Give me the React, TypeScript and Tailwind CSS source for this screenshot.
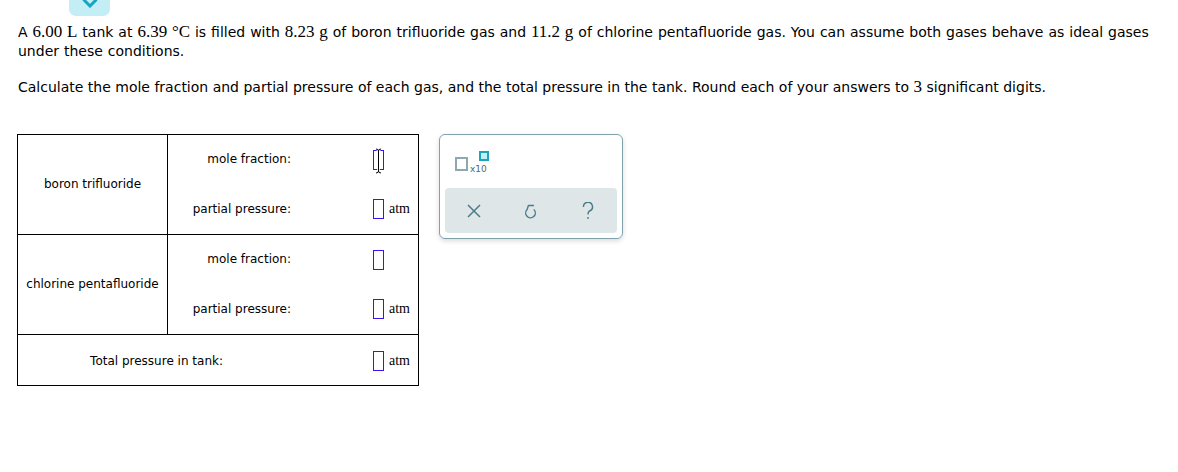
import React from "react";

function Box({ cursor = false }: { cursor?: boolean }) {
  return (
    <div className="relative w-[11px] h-[20px] border border-[#3b12f5] shrink-0">
      {cursor && (
        <svg className="absolute left-[0px] top-[-3px]" width="9" height="26" viewBox="0 0 9 26">
          <path d="M2 1 Q4.5 1 4.5 3 Q4.5 1 7 1 M4.5 3 V23 M2 25 Q4.5 25 4.5 23 Q4.5 25 7 25" stroke="#fff" strokeWidth="2.6" fill="none" />
          <path d="M2 1 Q4.5 1 4.5 3 Q4.5 1 7 1 M4.5 3 V23 M2 25 Q4.5 25 4.5 23 Q4.5 25 7 25" stroke="#000" strokeWidth="1" fill="none" />
        </svg>
      )}
    </div>
  );
}

function Atm() {
  return <span className="ml-[5px] text-[14px] leading-none font-['Liberation_Serif',serif]">atm</span>;
}

function SubRow({ label, unit, cursor }: { label: string; unit: boolean; cursor?: boolean }) {
  return (
    <div className="flex-1 flex items-center">
      <div className="w-[123px] text-right">{label}</div>
      <div className="ml-[82px] flex items-center">
        <Box cursor={cursor} />
        {unit && <Atm />}
      </div>
    </div>
  );
}

function GasRow({ name, cursor }: { name: string; cursor?: boolean }) {
  return (
    <div className="flex h-[100px] border-b border-black">
      <div className="w-[150px] border-r border-black flex items-center justify-center">{name}</div>
      <div className="flex-1 flex flex-col">
        <SubRow label="mole fraction:" unit={false} cursor={cursor} />
        <SubRow label="partial pressure:" unit={true} />
      </div>
    </div>
  );
}

const M = ({ children }: { children: React.ReactNode }) => (
  <span className="font-['Liberation_Serif',serif] text-[17px]">{children}</span>
);

export default function App() {
  return (
    <div className="w-[1178px] h-[472px] bg-white text-black font-['DejaVu_Sans',sans-serif] overflow-hidden">
      <div className="ml-[69px] w-[41px] h-[16px] bg-[#c4eef5] rounded-b-[7px] flex justify-center">
        <svg width="16" height="8" viewBox="0 0 16 8">
          <path d="M1.5 -0.5 L8 6 L14.5 -0.5" stroke="#17a5c4" strokeWidth="3" fill="none" />
        </svg>
      </div>
      <div className="px-[17px] text-[14px] leading-[19px]">
        <p className="mt-[6px] pl-[1px] whitespace-nowrap [word-spacing:0.5px]">
          A <M>6.00 L</M> tank at <M>6.39 °C</M> is filled with <M>8.23 g</M> of boron trifluoride gas and <M>11.2 g</M> of chlorine pentafluoride gas. You can assume both gases behave as ideal gases
          <br />
          under these conditions.
        </p>
        <p className="mt-[16px] pl-[1px] whitespace-nowrap">
          Calculate the mole fraction and partial pressure of each gas, and the total pressure in the tank. Round each of your answers to <M>3</M> significant digits.
        </p>
        <div className="mt-[37px] flex items-start gap-[20px]">
          <div className="w-[402px] border-x border-t border-black text-[12px] leading-[15px]">
            <GasRow name="boron trifluoride" cursor />
            <GasRow name="chlorine pentafluoride" />
            <div className="flex items-center h-[51px] pt-[2px] border-b border-black">
              <div className="w-[205px] text-right">Total pressure in tank:</div>
              <div className="ml-[150px] flex items-center">
                <Box />
                <Atm />
              </div>
            </div>
          </div>
          <div className="w-[184px] h-[105px] border border-[#7fa2ac] rounded-[6px] shadow-[0_2px_5px_rgba(0,0,0,0.15)] p-[5px] flex flex-col">
            <div className="relative h-[49px]">
              <div className="absolute left-[10px] top-[17px] w-[13px] h-[14px] border-2 border-[#8ea8af]" />
              <span className="absolute left-[25px] top-[24px] text-[9px] leading-[10px] text-[#4d6c75]">x10</span>
              <div className="absolute left-[34px] top-[11px] w-[10px] h-[10px] border-2 border-[#1ea3b8] bg-[#bff0f5]" />
            </div>
            <div className="h-[45px] bg-[#dfe6e8] rounded-[4px] grid grid-cols-3 items-center justify-items-center">
              <svg width="14" height="14" viewBox="0 0 14 14">
                <path d="M1 1 L13 13 M13 1 L1 13" stroke="#4b7b88" strokeWidth="1.5" fill="none" />
              </svg>
              <svg width="15" height="17" viewBox="0 0 15 17">
                <path d="M10.5 3.5 H5.4 L4.1 7.6 A4.8 4.8 0 1 0 11.2 7.9" stroke="#4b7b88" strokeWidth="1.4" fill="none" strokeLinejoin="round" strokeLinecap="round" />
              </svg>
              <svg width="12" height="18" viewBox="0 0 12 18">
                <path d="M1.5 5 A4.5 4.5 0 1 1 7.5 9 C6.2 9.6 6 10.5 6 12.5" stroke="#4b7b88" strokeWidth="1.4" fill="none" />
                <circle cx="6" cy="16" r="0.9" fill="#4b7b88" />
              </svg>
            </div>
          </div>
        </div>
      </div>
    </div>
  );
}
